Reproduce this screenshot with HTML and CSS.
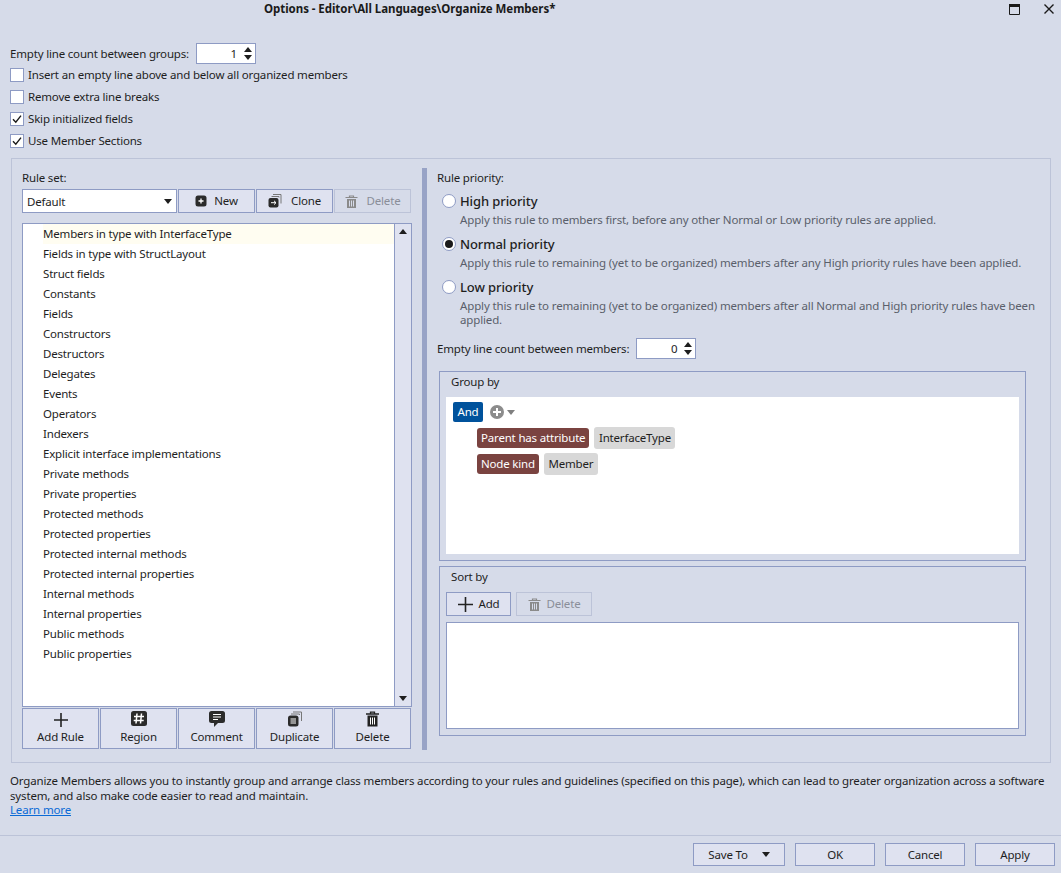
FILE: index.html
```html
<!DOCTYPE html>
<html lang="en">
<head>
<meta charset="utf-8">
<title>Options</title>
<link rel="stylesheet" href="styles.css">
</head>
<body>
<div class="window">
  <header class="titlebar">
    <span class="title">Options - Editor\All Languages\Organize Members*</span>
    <div class="winctl">
      <svg class="maxicon" width="11" height="11" viewBox="0 0 11 11"><path d="M0.500 0.500h10v10h-10z" fill="none" stroke="#1a1a1a"/><path d="M0 0h11v3H0z" fill="#1a1a1a"/></svg>
      <svg class="closeicon" width="10" height="10" viewBox="0 0 10 10"><path d="M0.500 0.500l9 9M9.500 0.500l-9 9" stroke="#1a1a1a" stroke-width="1.400" fill="none"/></svg>
    </div>
  </header>

  <div class="spinrow top-spin">
    <span>Empty line count between groups:</span>
    <div class="spin"><span class="spinval">1</span><span class="spinarrows"><i class="up"></i><i class="down"></i></span></div>
  </div>
  <div class="checks">
    <div class="check"><span class="box"></span>Insert an empty line above and below all organized members</div>
    <div class="check"><span class="box"></span>Remove extra line breaks</div>
    <div class="check"><span class="box"><svg width="12" height="12" viewBox="0 0 12 12"><path d="M2 6.200l2.800 3L10 2.600" fill="none" stroke="#1a1a1a" stroke-width="1.400"/></svg></span>Skip initialized fields</div>
    <div class="check"><span class="box"><svg width="12" height="12" viewBox="0 0 12 12"><path d="M2 6.200l2.800 3L10 2.600" fill="none" stroke="#1a1a1a" stroke-width="1.400"/></svg></span>Use Member Sections</div>
  </div>

  <section class="panel">
    <div class="leftcol">
      <div class="ruleset-label">Rule set:</div>
      <div class="toolbar">
        <div class="combo"><span>Default</span><i class="down"></i></div>
        <button class="btn btn-new"><svg width="12" height="12" viewBox="0 0 12 12"><rect x="0.500" y="0.500" width="11" height="11" rx="2.500" fill="#2b2b2b"/><path d="M6 3.500v5M3.500 6h5" stroke="#fff" stroke-width="1.300"/></svg>New</button>
        <button class="btn"><svg width="14" height="14" viewBox="0 0 14 14"><path d="M5 0.500h8v9" fill="none" stroke="#777"/><path d="M3.500 2.500h7.500v1" fill="none" stroke="#777"/><rect x="0.500" y="4" width="10" height="9.500" rx="2" fill="#2b2b2b"/><path d="M3 8.700h5M6 6.800l2 1.900-2 1.900" stroke="#fff" fill="none"/></svg>Clone</button>
        <button class="btn disabled"><svg width="13" height="13" viewBox="0 0 13 13"><path d="M0.500 2.500h12M4.500 2.500v-1.500h4v1.500" fill="none" stroke="#8a8a8a" stroke-width="1.200"/><path d="M2 4h9v9H2z" fill="#8a8a8a"/><path d="M4.500 5.500v6M6.500 5.500v6M8.500 5.500v6" stroke="#d6dbe9"/></svg>Delete</button>
      </div>
      <div class="listwrap">
        <ul class="rules">
          <li class="current">Members in type with InterfaceType</li>
          <li>Fields in type with StructLayout</li>
          <li>Struct fields</li>
          <li>Constants</li>
          <li>Fields</li>
          <li>Constructors</li>
          <li>Destructors</li>
          <li>Delegates</li>
          <li>Events</li>
          <li>Operators</li>
          <li>Indexers</li>
          <li>Explicit interface implementations</li>
          <li>Private methods</li>
          <li>Private properties</li>
          <li>Protected methods</li>
          <li>Protected properties</li>
          <li>Protected internal methods</li>
          <li>Protected internal properties</li>
          <li>Internal methods</li>
          <li>Internal properties</li>
          <li>Public methods</li>
          <li>Public properties</li>
        </ul>
        <div class="scrollbar"><i class="up"></i><i class="down"></i></div>
      </div>
      <div class="actions">
        <button class="act"><svg width="14" height="16" viewBox="0 0 14 16"><path d="M7 2v14M0 9h14" stroke="#222" stroke-width="1.600"/></svg>Add Rule</button>
        <button class="act"><svg width="16" height="16" viewBox="0 0 16 16"><rect width="16" height="15" rx="2.500" fill="#2b2b2b"/><path d="M6 2.500l-1 10M10.500 2.500l-1 10M3 5.500h10M2.700 9.500h10" stroke="#fff" stroke-width="1.500"/></svg>Region</button>
        <button class="act"><svg width="16" height="16" viewBox="0 0 16 16"><path d="M2.500 0h11A2.500 2.500 0 0 1 16 2.500v7a2.500 2.500 0 0 1-2.500 2.500H9l-4 4v-4H2.500A2.500 2.500 0 0 1 0 9.500v-7A2.500 2.500 0 0 1 2.500 0z" fill="#2b2b2b"/><path d="M4 3.500h8M4 6h8M4 8.500h5" stroke="#fff"/></svg>Comment</button>
        <button class="act"><svg width="14" height="15" viewBox="0 0 14 15"><path d="M5 .5h8.500v9" fill="none" stroke="#777"/><path d="M3 2.500h8.500v1" fill="none" stroke="#777"/><rect y="4" width="10.500" height="11" rx="2.500" fill="#2b2b2b"/><path d="M2.500 7.500h5.500M2.500 9.500h5.500M2.500 11.500h5.500" stroke="#fff"/></svg>Duplicate</button>
        <button class="act"><svg width="13" height="15" viewBox="0 0 13 15"><path d="M0 2.500h13M4.500 2V.7h4V2" fill="none" stroke="#222" stroke-width="1.300"/><path d="M1.500 4h10v11h-10z" fill="#222"/><path d="M4.500 6v7M6.500 6v7M8.500 6v7" stroke="#fff"/></svg>Delete</button>
      </div>
    </div>

    <div class="divider"></div>

    <div class="rightcol">
      <div class="priority-label">Rule priority:</div>
      <div class="radio">
        <div class="radiohead"><span class="dot"></span><span class="radiotitle">High priority</span></div>
        <p>Apply this rule to members first, before any other Normal or Low priority rules are applied.</p>
      </div>
      <div class="radio">
        <div class="radiohead"><span class="dot on"></span><span class="radiotitle">Normal priority</span></div>
        <p>Apply this rule to remaining (yet to be organized) members after any High priority rules have been applied.</p>
      </div>
      <div class="radio">
        <div class="radiohead"><span class="dot"></span><span class="radiotitle">Low priority</span></div>
        <p>Apply this rule to remaining (yet to be organized) members after all Normal and High priority rules have been applied.</p>
      </div>
      <div class="spinrow member-spin">
        <span>Empty line count between members:</span>
        <div class="spin"><span class="spinval">0</span><span class="spinarrows"><i class="up"></i><i class="down"></i></span></div>
      </div>

      <div class="group groupby">
        <div class="legend">Group by</div>
        <div class="canvas tree">
          <div class="androw"><span class="and">And</span>
            <svg class="addicon" width="14" height="14" viewBox="0 0 14 14"><circle cx="7" cy="7" r="7" fill="#8c8c8c"/><path d="M7 3v8M3 7h8" stroke="#fff" stroke-width="2"/></svg><i class="down caret-grey"></i></div>
          <div class="chips"><span class="chip key">Parent has attribute</span><span class="chip val">InterfaceType</span></div>
          <div class="chips"><span class="chip key">Node kind</span><span class="chip val">Member</span></div>
        </div>
      </div>

      <div class="group sortby">
        <div class="legend">Sort by</div>
        <div class="sortbar">
          <button class="btn small"><svg width="15" height="15" viewBox="0 0 15 15"><path d="M7.500 0v15M0 7.500h15" stroke="#222" stroke-width="1.600"/></svg>Add</button>
          <button class="btn small disabled"><svg width="13" height="13" viewBox="0 0 13 13"><path d="M0.500 2.500h12M4.500 2.500v-1.500h4v1.500" fill="none" stroke="#8a8a8a" stroke-width="1.200"/><path d="M2 4h9v9H2z" fill="#8a8a8a"/><path d="M4.500 5.500v6M6.500 5.500v6M8.500 5.500v6" stroke="#d6dbe9"/></svg>Delete</button>
        </div>
        <div class="canvas sortlist"></div>
      </div>
    </div>
  </section>

  <div class="about">
    <p>Organize Members allows you to instantly group and arrange class members according to your rules and guidelines (specified on this page), which can lead to greater organization across a software system, and also make code easier to read and maintain.</p>
    <a href="#">Learn more</a>
  </div>

  <footer class="footer">
    <button class="btn foot saveto">Save To<i class="down"></i></button>
    <button class="btn foot">OK</button>
    <button class="btn foot">Cancel</button>
    <button class="btn foot">Apply</button>
  </footer>
</div>
</body>
</html>
```
FILE: styles.css
```css
* { box-sizing: border-box; }
html, body { margin: 0; padding: 0; }
body {
  width: 1061px;
  height: 873px;
  overflow: hidden;
  background: #d6dbe9;
  color: #1e1e1e;
  font: 11.5px/14px "Noto Sans", "Open Sans", sans-serif;
  letter-spacing: -0.18px;
}
i { display: block; }
i.up, i.down { width: 0; height: 0; border-left: 4.5px solid transparent; border-right: 4.5px solid transparent; }
i.up { border-bottom: 5px solid #1e1e1e; }
i.down { border-top: 5px solid #1e1e1e; }
p { margin: 0; }

.window { display: flex; flex-direction: column; height: 873px; }

.titlebar { display: flex; height: 18px; padding: 0 0 0 264px; align-items: center; }
.title { font-weight: 700; color: #1a1a1a; letter-spacing: -0.055px; }
.winctl { margin-left: auto; display: flex; align-items: center; }
.maxicon { margin-right: 24px; }
.closeicon { margin-right: 7px; }

.spinrow { display: flex; align-items: center; height: 21px; }
.top-spin { margin: 25px 0 0 10px; }
.spin { width: 60px; height: 21px; margin-left: 7px; background: #fff; border: 1px solid #8e9bc4; display: flex; align-items: center; justify-content: flex-end; padding-right: 3px; }
.spinval { margin-right: 7px; }
.spinarrows { display: flex; flex-direction: column; gap: 3px; }

.checks { margin-left: 10px; }
.check { display: flex; align-items: center; height: 22px; }
.box { width: 14px; height: 14px; margin-right: 4px; background: #fff; border: 1px solid #8e9bc4; display: flex; align-items: center; justify-content: center; }

.panel { display: flex; width: 1040px; height: 605px; margin: 6px 0 0 11px; padding: 9px 0 12px 10px; border: 1px solid #bcc3d8; }
.leftcol { width: 390px; display: flex; flex-direction: column; }
.ruleset-label { height: 21px; padding-top: 3px; }
.toolbar { display: flex; height: 24px; gap: 1px; }
.combo { width: 155px; background: #fff; border: 1px solid #8e9bc4; display: flex; align-items: center; justify-content: space-between; padding: 1px 4px 0 4px; }

.btn { display: flex; align-items: center; justify-content: center; gap: 9px; width: 77px; height: 24px; padding: 0; background: #dfe2f0; border: 1px solid #8e9bc4; color: #1e1e1e; font: inherit; letter-spacing: inherit; }
.btn-new { gap: 7px; }
.btn.disabled { color: #8a8e99; border-color: #bcc3d8; background: #d6dbe9; }

.listwrap { display: flex; width: 390px; height: 484px; margin-top: 10px; border: 1px solid #8e9bc4; }
.rules { list-style: none; margin: 0; padding: 0; flex: 1; background: #fff; }
.rules li { height: 20px; margin-left: 20px; line-height: 19px; }
.rules li.current { background: #fffdf1; }
.scrollbar { width: 17px; border-left: 1px solid #8e9bc4; background: #dfe2f0; display: flex; flex-direction: column; justify-content: space-between; align-items: center; padding: 5px 0; }

.actions { display: flex; gap: 1px; margin-top: 1px; }
.act { display: flex; flex-direction: column; align-items: center; width: 77px; height: 41px; padding: 2px 0 0; background: #dfe2f0; border: 1px solid #8e9bc4; color: #1e1e1e; font: inherit; letter-spacing: inherit; }
.act svg { height: 16px; margin-bottom: 3px; flex: none; }

.divider { width: 5px; margin: 0 10px; background: #98a3c6; }

.rightcol { width: 600px; }
.priority-label { height: 23px; padding-top: 3px; }
.radio { margin-bottom: 7px; }
.radio p { margin-left: 23px; color: #5a5f6b; line-height: 14px; width: 580px; letter-spacing: -0.14px; }
.radiohead { display: flex; align-items: center; height: 20px; padding-left: 5px; margin-bottom: 2px; }
.radiotitle { font-size: 13px; letter-spacing: -0.1px; margin-left: 4px; font-weight: 500; }
.dot { width: 14px; height: 14px; border-radius: 50%; background: #fff; border: 1px solid #8e9bc4; display: flex; align-items: center; justify-content: center; }
.dot.on::after { content: ""; width: 8px; height: 8px; border-radius: 50%; background: #1a1a1a; }

.member-spin { margin-top: 11px; }

.group { width: 587px; margin-left: 2px; padding: 0 6px; border: 1px solid #8e9bc4; }
.groupby { height: 190px; margin-top: 12px; }
.sortby { height: 170px; margin-top: 5px; }
.legend { padding: 3px 0 0 5px; height: 25px; }
.canvas { background: #fff; }
.tree { height: 157px; padding: 5px 7px; }
.androw { display: flex; align-items: center; height: 20px; }
.and { width: 30px; height: 20px; line-height: 20px; text-align: center; background: #00529c; color: #fff; border-radius: 2px; }
.addicon { margin-left: 7px; }
.caret-grey { margin-left: 3px; border-top-color: #7f7f7f !important; }
.chips { display: flex; align-items: center; gap: 5px; margin-left: 24px; height: 22px; margin-top: 5px; }
.chips:last-child { margin-top: 4px; }
.chip { height: 21px; line-height: 21px; padding: 0 4px; border-radius: 3px; }
.key { background: #7a4340; color: #fff; height: 20px; line-height: 20px; }
.val { background: #d8d8d8; height: 22px; line-height: 22px; padding: 0 4.5px; }

.sortbar { display: flex; gap: 5px; }
.small { height: 24px; gap: 6px; width: 65px; }
.small.disabled { width: 76px; gap: 6px; }
.sortlist { height: 107px; margin-top: 6px; border: 1px solid #8e9bc4; }

.about { margin: 11px 0 0 10px; width: 1040px; line-height: 14.5px; letter-spacing: -0.155px; }
.about a { color: #0a6ad6; }

.footer { display: flex; justify-content: flex-end; gap: 10px; margin-top: auto; height: 38px; padding: 7px 6px 7px 0; border-top: 1px solid #bcc3d8; }
.foot { width: 80px; height: 23px; }
.saveto { width: 92px; gap: 14px; }
```
